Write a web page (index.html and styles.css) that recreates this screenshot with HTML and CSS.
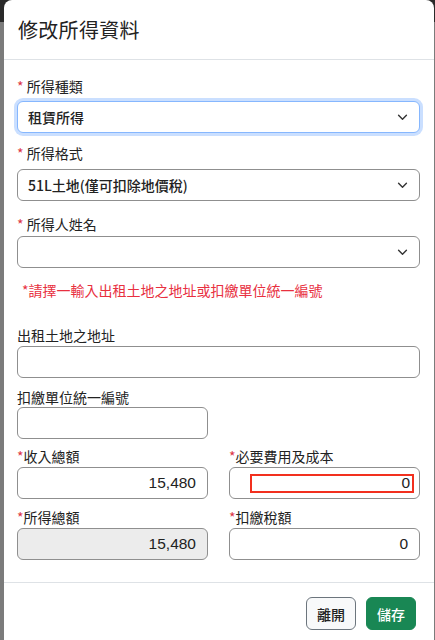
FILE: index.html
```html
<!DOCTYPE html>
<html lang="zh-Hant">
<head>
<meta charset="utf-8">
<link rel="stylesheet" href="styles.css">
</head>
<body>
<div class="modal">
  <div class="modal-header">
    <h1 class="modal-title">修改所得資料</h1>
  </div>
  <div class="modal-body">
    <div class="field f1">
      <label class="lbl"><span class="req">*</span> 所得種類</label>
      <div class="select focus"><span>租賃所得</span><svg class="chev" viewBox="0 0 12 8" width="11" height="7"><path d="M1.5 1.5 6 6l4.5-4.5" fill="none" stroke="#333" stroke-width="1.6" stroke-linecap="round" stroke-linejoin="round"/></svg></div>
    </div>
    <div class="field f2">
      <label class="lbl"><span class="req">*</span> 所得格式</label>
      <div class="select"><span>51L土地(僅可扣除地價稅)</span><svg class="chev" viewBox="0 0 12 8" width="11" height="7"><path d="M1.5 1.5 6 6l4.5-4.5" fill="none" stroke="#333" stroke-width="1.6" stroke-linecap="round" stroke-linejoin="round"/></svg></div>
    </div>
    <div class="field f3">
      <label class="lbl"><span class="req">*</span> 所得人姓名</label>
      <div class="select"><span></span><svg class="chev" viewBox="0 0 12 8" width="11" height="7"><path d="M1.5 1.5 6 6l4.5-4.5" fill="none" stroke="#333" stroke-width="1.6" stroke-linecap="round" stroke-linejoin="round"/></svg></div>
    </div>
    <p class="err">*請擇一輸入出租土地之地址或扣繳單位統一編號</p>
    <div class="field f4">
      <label class="lbl">出租土地之地址</label>
      <div class="input"></div>
    </div>
    <div class="field f5">
      <label class="lbl">扣繳單位統一編號</label>
      <div class="input half"></div>
    </div>
    <div class="grid g1">
      <div class="field">
        <label class="lbl"><span class="req">*</span>收入總額</label>
        <div class="input num">15,480</div>
      </div>
      <div class="field">
        <label class="lbl"><span class="req">*</span>必要費用及成本</label>
        <div class="input num inner-wrap"><span class="inner">0</span></div>
      </div>
    </div>
    <div class="grid g2">
      <div class="field">
        <label class="lbl"><span class="req">*</span>所得總額</label>
        <div class="input num disabled">15,480</div>
      </div>
      <div class="field">
        <label class="lbl"><span class="req">*</span>扣繳稅額</label>
        <div class="input num">0</div>
      </div>
    </div>
  </div>
  <div class="modal-footer">
    <button class="btn btn-light">離開</button>
    <button class="btn btn-green">儲存</button>
  </div>
</div>
</body>
</html>
```
FILE: styles.css
```css
* { box-sizing: border-box; }
html, body { margin: 0; padding: 0; }
body {
  width: 435px;
  height: 640px;
  background: linear-gradient(#2a2a2a 0, #2a2a2a 22px, #7b7b7b 22px);
  font-family: "Noto Sans CJK TC", "Noto Sans", sans-serif;
  color: #212529;
  overflow: hidden;
}
.modal {
  margin-left: 4px;
  width: 430px;
  height: 640px;
  background: #fff;
  border-radius: 8px 8px 0 0;
  display: flex;
  flex-direction: column;
}
.modal-header {
  height: 60px;
  border-bottom: 1px solid #dee2e6;
  display: flex;
  align-items: center;
  padding: 0 14px;
}
.modal-title {
  margin: 0;
  font-size: 20px;
  font-weight: 400;
  line-height: 24px;
  letter-spacing: 0.3px;
  color: #222;
}
.modal-body {
  padding: 16px 14px 0 13px;
  height: 523px;
  border-bottom: 1px solid #dee2e6;
}
.field { display: flex; flex-direction: column; }
.lbl {
  font-size: 14px;
  line-height: 20px;
  color: #222;
}
.req { color: #dc3545; }
.select, .input {
  height: 32px;
  border: 1px solid #8f8f8f;
  border-radius: 6px;
  display: flex;
  align-items: center;
  font-size: 14px;
  color: #222;
  background: #fff;
}
.select { padding: 0 11px 0 10px; justify-content: space-between; }
.select span { font-weight: 500; }
.select.focus {
  border-color: #86b7fe;
  box-shadow: 0 0 0 3px rgba(13, 110, 253, 0.22);
}
.chev { flex: none; }
.f1 .lbl { margin-bottom: 5px; }
.f2 { margin-top: 10px; }
.f2 .lbl { margin-bottom: 6px; }
.f3 { margin-top: 13px; }
.f3 .lbl { margin-bottom: 2px; }
.err {
  margin: 12px 0 0 5px;
  font-size: 14px;
  line-height: 20px;
  color: #e8303f;
}
.f4 { margin-top: 25px; }
.f4 .lbl { margin-bottom: 1px; }
.f5 { margin-top: 9px; }
.half { width: 191px; }
.grid {
  display: grid;
  grid-template-columns: 1fr 1fr;
  column-gap: 21px;
}
.grid .lbl { margin-bottom: 1px; }
.g1 { margin-top: 7px; }
.g2 { margin-top: 8px; }
.num {
  justify-content: flex-end;
  padding-right: 11px;
  font-family: "Liberation Sans", Arial, sans-serif;
  font-size: 15.5px;
  color: #222;
}
.disabled { background: #ececec; }
.inner-wrap { padding-right: 5px; }
.inner {
  width: 164px;
  height: 19px;
  border: 2px solid #f2301e;
  display: flex;
  align-items: center;
  justify-content: flex-end;
  padding-right: 2px;
}
.modal-footer {
  flex: 1;
  display: flex;
  justify-content: flex-end;
  align-items: flex-start;
  gap: 10px;
  padding: 14px 18px 0 0;
}
.btn {
  height: 33px;
  width: 50px;
  border-radius: 6px;
  font-family: "Noto Sans CJK TC", sans-serif;
  font-size: 14px;
  font-weight: 500;
  padding: 0;
}
.btn-light {
  background: #f8f9fa;
  border: 1px solid #6c757d;
  color: #222;
}
.btn-green {
  background: #198754;
  border: 1px solid #198754;
  color: #fff;
}
```
